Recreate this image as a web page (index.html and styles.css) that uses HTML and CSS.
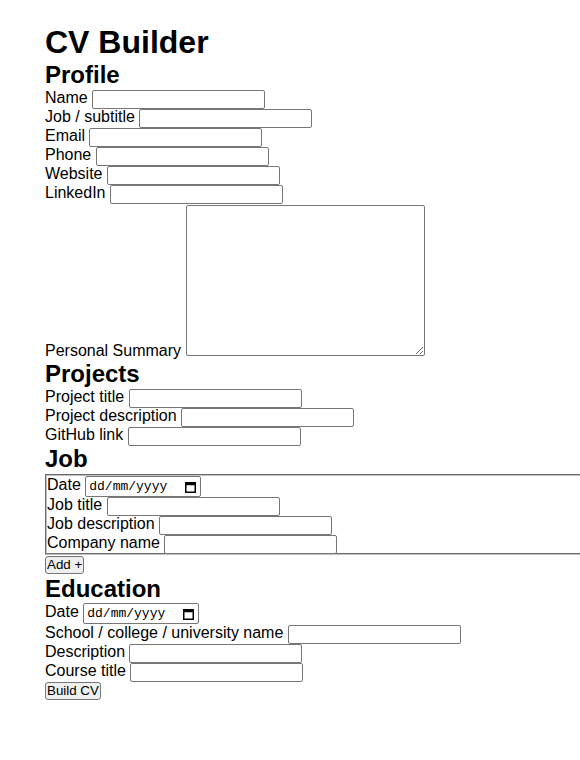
FILE: index.html
```html
<!DOCTYPE html>
<html lang="en">
<head>
<meta charset="utf-8">
<title>CV Builder</title>
<link rel="stylesheet" href="styles.css">
</head>
<body>
<h1 class="title">CV Builder</h1>
<form class="cv-form">
  <section class="group">
    <h2 class="group-title">Profile</h2>
    <div class="row"><label for="name">Name</label><input class="field" id="name" type="text"></div>
    <div class="row"><label for="subtitle">Job / subtitle</label><input class="field" id="subtitle" type="text"></div>
    <div class="row"><label for="email">Email</label><input class="field" id="email" type="text"></div>
    <div class="row"><label for="phone">Phone</label><input class="field" id="phone" type="text"></div>
    <div class="row"><label for="website">Website</label><input class="field" id="website" type="text"></div>
    <div class="row"><label for="linkedin">LinkedIn</label><input class="field" id="linkedin" type="text"></div>
    <div class="row-area"><label for="summary">Personal Summary</label><textarea class="area" id="summary"></textarea></div>
  </section>

  <section class="group">
    <h2 class="group-title">Projects</h2>
    <div class="row"><label for="ptitle">Project title</label><input class="field" id="ptitle" type="text"></div>
    <div class="row"><label for="pdesc">Project description</label><input class="field" id="pdesc" type="text"></div>
    <div class="row"><label for="github">GitHub link</label><input class="field" id="github" type="text"></div>
  </section>

  <section class="group">
    <h2 class="group-title">Job</h2>
    <fieldset class="job-set">
      <div class="row row-date">
        <label>Date</label>
        <span class="date-field" role="textbox" aria-label="Job date"><span class="date-text">dd/mm/yyyy</span><svg class="cal" width="11" height="12" viewBox="0 0 11 12"><rect x="0.75" y="1.75" width="9.5" height="9.5" fill="none" stroke="#000" stroke-width="1.5"/><rect x="0.75" y="1.75" width="9.5" height="2.5" fill="#000"/></svg></span>
      </div>
      <div class="row"><label for="jtitle">Job title</label><input class="field" id="jtitle" type="text"></div>
      <div class="row"><label for="jdesc">Job description</label><input class="field" id="jdesc" type="text"></div>
      <div class="row"><label for="company">Company name</label><input class="field" id="company" type="text"></div>
    </fieldset>
    <div class="row-btn"><button class="btn" type="button">Add +</button></div>
  </section>

  <section class="group">
    <h2 class="group-title">Education</h2>
    <div class="row row-date row-date-edu">
      <label>Date</label>
      <span class="date-field" role="textbox" aria-label="Education date"><span class="date-text">dd/mm/yyyy</span><svg class="cal" width="11" height="12" viewBox="0 0 11 12"><rect x="0.75" y="1.75" width="9.5" height="9.5" fill="none" stroke="#000" stroke-width="1.5"/><rect x="0.75" y="1.75" width="9.5" height="2.5" fill="#000"/></svg></span>
    </div>
    <div class="row"><label for="school">School / college / university name</label><input class="field" id="school" type="text"></div>
    <div class="row"><label for="edesc">Description</label><input class="field" id="edesc" type="text"></div>
    <div class="row"><label for="course">Course title</label><input class="field" id="course" type="text"></div>
    <div class="row-btn"><button class="btn" type="submit">Build CV</button></div>
  </section>
</form>
</body>
</html>
```

FILE: styles.css
```css
html, body {
  background: #fff;
}
body {
  margin: 24px 0 0 45px;
  font-family: "Liberation Sans", Arial, sans-serif;
  font-size: 16px;
  color: #000;
  overflow-x: hidden;
}
.title {
  margin: 0;
  font-size: 32px;
  font-weight: bold;
  line-height: normal;
}
.cv-form {
  margin: 0;
}
.group-title {
  margin: 0;
  font-size: 24px;
  font-weight: bold;
  line-height: normal;
}
.row {
  display: flex;
  align-items: flex-start;
  column-gap: 4.45px;
  height: 19px;
  white-space: nowrap;
}
.row label {
  line-height: normal;
}
.field {
  box-sizing: border-box;
  width: 173px;
  height: 19px;
  margin: 1px 0 0 0;
  padding: 1px 2px;
  border: 1px solid #767676;
  border-radius: 2px;
  font: 13.33px "Liberation Sans", Arial, sans-serif;
  background: #fff;
}
.row-area {
  display: flex;
  align-items: flex-end;
  column-gap: 5px;
  padding-top: 2px;
}
.area {
  box-sizing: border-box;
  width: 239px;
  height: 151px;
  margin: 0 0 4px 0;
  padding: 2px;
  border: 1px solid #767676;
  border-radius: 2px;
  font: 13.33px "Liberation Mono", monospace;
}
.job-set {
  margin: 1px -12px 0 0;
  padding: 0;
  border: 2px groove #c0c0c0;
  min-width: 0;
}
.row-date {
  height: 20px;
}
.row-date-edu {
  height: 21px;
}
.date-field {
  box-sizing: border-box;
  display: flex;
  align-items: center;
  justify-content: space-between;
  width: 116px;
  height: 21px;
  margin-top: 0;
  padding: 0 4px 0 3px;
  border: 1px solid #767676;
  border-radius: 2px;
  background: #fff;
}
.date-text {
  font: 13px "Liberation Mono", "DejaVu Sans Mono", monospace;
  color: #000;
}
.cal {
  display: block;
}
.row-btn {
  height: 20px;
}
.btn {
  box-sizing: border-box;
  height: 18px;
  margin: 1px 0 0 0;
  padding: 0 1px;
  border: 1px solid #767676;
  border-radius: 3px;
  background: #efefef;
  color: #000;
  font: 13.33px "Liberation Sans", Arial, sans-serif;
  line-height: 14px;
}
```
